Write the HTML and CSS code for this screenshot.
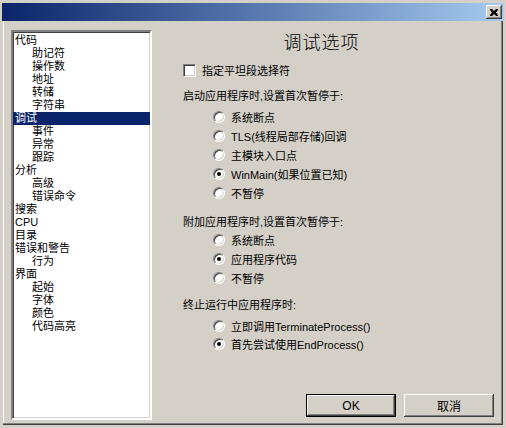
FILE: index.html
```html
<!DOCTYPE html>
<html lang="zh-CN">
<head>
  <meta charset="UTF-8" />
  <title>调试选项</title>
  <link rel="stylesheet" href="styles.css">
</head>
<body>

  <div class="window">

    <div class="titlebar">
      <span class="close-btn">
        <svg width="8" height="7" viewBox="0 0 8 7"><path d="M0 0h2l2 2 2-2h2v1l-2 2.5 2 2.5v1h-2l-2-2-2 2h-2v-1l2-2.5-2-2.5z" fill="#000"/></svg>
      </span>
    </div>

    <div class="dialog-body">

      <ul class="tree">
        <li>代码</li>
        <li class="child">助记符</li>
        <li class="child">操作数</li>
        <li class="child">地址</li>
        <li class="child">转储</li>
        <li class="child">字符串</li>
        <li class="selected">调试</li>
        <li class="child">事件</li>
        <li class="child">异常</li>
        <li class="child">跟踪</li>
        <li>分析</li>
        <li class="child">高级</li>
        <li class="child">错误命令</li>
        <li>搜索</li>
        <li>CPU</li>
        <li>目录</li>
        <li>错误和警告</li>
        <li class="child">行为</li>
        <li>界面</li>
        <li class="child">起始</li>
        <li class="child">字体</li>
        <li class="child">颜色</li>
        <li class="child">代码高亮</li>
      </ul>

      <div class="panel">
        <h1>调试选项</h1>

        <div class="option check-row">
          <span class="checkbox"></span>指定平坦段选择符
        </div>

        <div class="group-label first">启动应用程序时,设置首次暂停于:</div>
        <div class="radio-group first">
          <div class="option"><span class="radio"></span>系统断点</div>
          <div class="option"><span class="radio"></span>TLS(线程局部存储)回调</div>
          <div class="option"><span class="radio"></span>主模块入口点</div>
          <div class="option"><span class="radio on"></span>WinMain(如果位置已知)</div>
          <div class="option"><span class="radio"></span>不暂停</div>
        </div>

        <div class="group-label second">附加应用程序时,设置首次暂停于:</div>
        <div class="radio-group second">
          <div class="option"><span class="radio"></span>系统断点</div>
          <div class="option"><span class="radio on"></span>应用程序代码</div>
          <div class="option"><span class="radio"></span>不暂停</div>
        </div>

        <div class="group-label third">终止运行中应用程序时:</div>
        <div class="radio-group third">
          <div class="option"><span class="radio"></span>立即调用TerminateProcess()</div>
          <div class="option"><span class="radio on"></span>首先尝试使用EndProcess()</div>
        </div>

        <div class="buttons">
          <button class="btn default">OK</button>
          <button class="btn">取消</button>
        </div>
      </div>

    </div>
  </div>

</body>
</html>
```

FILE: styles.css
```css
* {
  box-sizing: border-box;
}

body {
  margin: 0;
  font-family: "Liberation Sans", "Noto Sans CJK SC", sans-serif;
  font-size: 11px;
  color: #000;
  background: #d4d0c8;
}

.window {
  width: 506px;
  height: 428px;
  display: flex;
  flex-direction: column;
  background: #d4d0c8;
  border: 3px solid #d4d0c8;
  box-shadow: inset -1px -1px 0 #404040, inset -2px -2px 0 #808080, inset 1px 1px 0 #ffffff;
}

.titlebar {
  height: 18px;
  margin: 0 -1px;
  display: flex;
  justify-content: flex-end;
  align-items: center;
  padding-right: 2px;
  background: linear-gradient(to right, #0a246a, #a6caf0);
}

.close-btn {
  width: 16px;
  height: 14px;
  display: flex;
  align-items: center;
  justify-content: center;
  background: #d4d0c8;
  box-shadow: inset -1px -1px 0 #404040, inset 1px 1px 0 #ffffff, inset -2px -2px 0 #808080;
}

.dialog-body {
  flex: 1;
  display: flex;
  padding: 9px 0 5px 8px;
}

/* tree on the left */
.tree {
  list-style: none;
  margin: 0;
  width: 141px;
  padding: 2px 0 0;
  background: #fff;
  border: 2px solid;
  border-color: #808080 #ffffff #ffffff #808080;
  box-shadow: inset 1px 1px 0 #404040, inset -1px -1px 0 #d4d0c8;
}

.tree li {
  height: 13px;
  line-height: 13px;
  margin-left: 0;
  padding-left: 2px;
  white-space: nowrap;
}

.tree li.child {
  padding-left: 19px;
}

.tree li.selected {
  background: #0a246a;
  color: #fff;
}

/* options panel */
.panel {
  flex: 1;
  display: flex;
  flex-direction: column;
  padding: 0 9px 3px 31px;
}

.panel h1 {
  margin: 3px 0 0;
  padding-right: 34px;
  font-size: 18px;
  font-weight: 300;
  line-height: 20px;
  text-align: center;
  letter-spacing: 1px;
}

.option {
  display: flex;
  align-items: center;
  height: 19px;
  white-space: nowrap;
}

.check-row {
  margin-top: 9px;
  height: 16px;
}

.checkbox {
  width: 13px;
  height: 13px;
  margin-right: 6px;
  background: #fff;
  border: 1px solid;
  border-color: #808080 #ffffff #ffffff #808080;
  box-shadow: inset 1px 1px 0 #404040, inset -1px -1px 0 #d4d0c8;
}

.group-label {
  height: 16px;
  line-height: 16px;
}

.group-label.first { margin-top: 10px; }
.group-label.second { margin-top: 12px; }
.group-label.third { margin-top: 10px; }

.radio-group {
  padding-left: 30px;
}

.radio-group.first { margin-top: 3px; }
.radio-group.second { margin-top: 0; }
.radio-group.third { margin-top: 4px; }

.radio-group.third .option {
  height: 18px;
}

.radio {
  position: relative;
  width: 12px;
  height: 12px;
  margin-right: 6px;
  border-radius: 50%;
  background: #fff;
  border: 1px solid;
  border-color: #808080 #ffffff #ffffff #808080;
  box-shadow: inset 1px 1px 0 #404040, inset -1px -1px 0 #d4d0c8;
}

.radio.on::after {
  content: "";
  position: absolute;
  left: 3px;
  top: 3px;
  width: 4px;
  height: 4px;
  border-radius: 50%;
  background: #000;
}

.buttons {
  margin-top: auto;
  display: flex;
  justify-content: flex-end;
  gap: 8px;
}

.btn {
  width: 90px;
  height: 23px;
  font-family: inherit;
  font-size: 12px;
  color: #000;
  background: #d4d0c8;
  border: none;
  box-shadow: inset -1px -1px 0 #404040, inset 1px 1px 0 #ffffff, inset -2px -2px 0 #808080;
}

.btn.default {
  border: 1px solid #000;
}
```
